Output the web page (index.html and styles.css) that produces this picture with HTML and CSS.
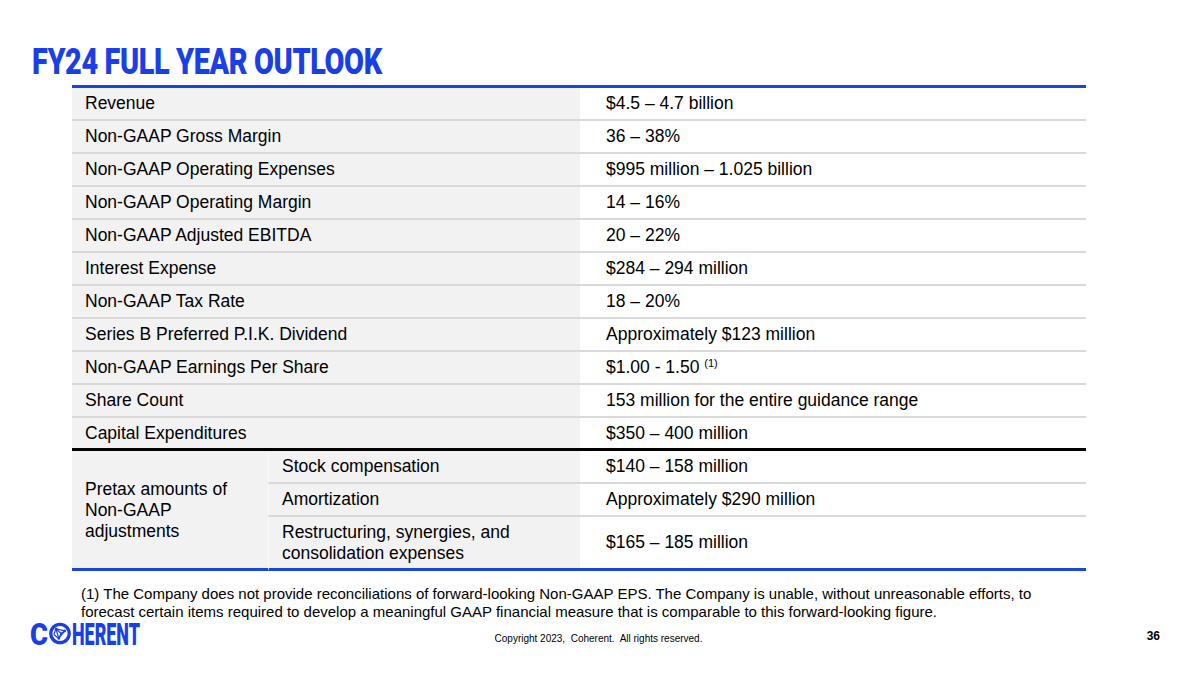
FILE: index.html
```html
<!DOCTYPE html>
<html>
<head>
<meta charset="utf-8">
<link rel="stylesheet" href="styles.css">
</head>
<body>
<div class="slide">
  <h1 class="title"><span class="title-text">FY24 FULL YEAR OUTLOOK</span></h1>
  <table class="outlook">
    <colgroup><col class="c1"><col class="c2"><col class="c3"></colgroup>
    <tr><td class="lbl" colspan="2">Revenue</td><td class="val">$4.5 – 4.7 billion</td></tr>
    <tr><td class="lbl" colspan="2">Non-GAAP Gross Margin</td><td class="val">36 – 38%</td></tr>
    <tr><td class="lbl" colspan="2">Non-GAAP Operating Expenses</td><td class="val">$995 million – 1.025 billion</td></tr>
    <tr><td class="lbl" colspan="2">Non-GAAP Operating Margin</td><td class="val">14 – 16%</td></tr>
    <tr><td class="lbl" colspan="2">Non-GAAP Adjusted EBITDA</td><td class="val">20 – 22%</td></tr>
    <tr><td class="lbl" colspan="2">Interest Expense</td><td class="val">$284 – 294 million</td></tr>
    <tr><td class="lbl" colspan="2">Non-GAAP Tax Rate</td><td class="val">18 – 20%</td></tr>
    <tr><td class="lbl" colspan="2">Series B Preferred P.I.K. Dividend</td><td class="val">Approximately $123 million</td></tr>
    <tr><td class="lbl" colspan="2">Non-GAAP Earnings Per Share</td><td class="val">$1.00 - 1.50 <sup>(1)</sup></td></tr>
    <tr><td class="lbl" colspan="2">Share Count</td><td class="val">153 million for the entire guidance range</td></tr>
    <tr class="row-last"><td class="lbl" colspan="2">Capital Expenditures</td><td class="val">$350 – 400 million</td></tr>
    <tr><td class="group" rowspan="3">Pretax amounts of<br>Non-GAAP<br>adjustments</td><td class="sub">Stock compensation</td><td class="val">$140 – 158 million</td></tr>
    <tr><td class="sub">Amortization</td><td class="val">Approximately $290 million</td></tr>
    <tr class="row-end"><td class="sub">Restructuring, synergies, and<br>consolidation expenses</td><td class="val">$165 – 185 million</td></tr>
  </table>
  <p class="note">(1) The Company does not provide reconciliations of forward-looking Non-GAAP EPS. The Company is unable, without unreasonable efforts, to<br>forecast certain items required to develop a meaningful GAAP financial measure that is comparable to this forward-looking figure.</p>
  <footer class="footer">
    <svg class="logo" viewBox="0 0 112 26" width="112" height="26">
      <text x="0" y="23.5" textLength="18" lengthAdjust="spacingAndGlyphs" class="logo-text">C</text>
      <g transform="translate(30 12.5)">
        <circle r="9.2" fill="none" stroke="#1a3fe6" stroke-width="3.2"/>
        <g fill="none" stroke="#1a3fe6" stroke-width="1.2" stroke-linejoin="round">
          <path d="M-4 -4.6 L4.8 -2.6 L-1.2 5 Z"/>
          <path d="M-4 -4.6 L1 0 L4.8 -2.6 M1 0 L-1.2 5"/>
          <path d="M-6.2 1 L-4 -4.6 M-6.2 1 L-1.2 5"/>
        </g>
        <g fill="#1a3fe6"><circle cx="-4" cy="-4.6" r="1.3"/><circle cx="4.8" cy="-2.6" r="1.3"/><circle cx="-1.2" cy="5" r="1.3"/><circle cx="1" cy="0" r="0.9"/></g>
      </g>
      <text x="42" y="23.5" textLength="68" lengthAdjust="spacingAndGlyphs" class="logo-text">HERENT</text>
    </svg>
    <div class="copyright">Copyright 2023,&nbsp; Coherent.&nbsp; All rights reserved.</div>
    <div class="page">36</div>
  </footer>
</div>
</body>
</html>
```
FILE: styles.css
```css
* { box-sizing: border-box; }
html, body { margin: 0; padding: 0; background: #ffffff; }
body { font-family: "Liberation Sans", Arial, sans-serif; color: #000; }

.slide {
  width: 1200px;
  height: 675px;
  overflow: hidden;
  background: #fff;
}

.title {
  margin: 0;
  padding: 44px 0 0 32px;
  height: 85px;
  line-height: 36px;
  font-family: Roboto, "Liberation Sans", sans-serif;
  font-weight: 900;
  font-size: 37px;
  color: #1a3fe6;
  letter-spacing: -0.5px;
  white-space: nowrap;
}
.title-text {
  display: inline-block;
  transform: scaleX(0.78);
  transform-origin: left center;
}

.outlook {
  margin-left: 72px;
  width: 1014px;
  border-collapse: separate;
  border-spacing: 0;
  table-layout: fixed;
  border-top: 3px solid #1a44e0;
  font-size: 17.5px;
}
.c1 { width: 196px; }
.c2 { width: 312px; }
.c3 { width: 506px; }

.outlook td {
  height: 33px;
  padding: 0 0 0 13px;
  border-bottom: 2px solid #d9d9d9;
  vertical-align: middle;
  line-height: 21px;
  white-space: nowrap;
}
.outlook td.val { padding-left: 26px; background: #fff; }
.outlook td.lbl, .outlook td.sub, .outlook td.group { background: #f2f2f2; }
.outlook td.sub { border-left: 1px solid #f8f8f8; }

.outlook .row-last td { height: 33px; border-bottom: 3px solid #000; }
.outlook td.group { border-bottom: 3px solid #1a44e0; padding-top: 2px; }
.outlook .row-end td { height: 54px; border-bottom: 3px solid #1a44e0; }

.outlook sup { font-size: 11px; vertical-align: 6px; line-height: 0; }

.note {
  margin: 14px 0 0 81px;
  font-size: 15px;
  line-height: 18px;
  white-space: nowrap;
}

.footer {
  display: grid;
  grid-template-columns: 1fr auto 1fr;
  align-items: start;
  padding: 0 40px 0 30px;
}
.logo { display: block; overflow: visible; }
.logo-text {
  font-family: Roboto, "Liberation Sans", sans-serif;
  font-weight: 900;
  font-size: 31px;
  fill: #1a3fe6;
}
.copyright {
  font-size: 10px;
  line-height: 12px;
  padding-top: 12px;
  padding-left: 7px;
}
.page {
  justify-self: end;
  font-weight: 700;
  font-size: 12px;
  line-height: 14px;
  padding-top: 8px;
}
```
